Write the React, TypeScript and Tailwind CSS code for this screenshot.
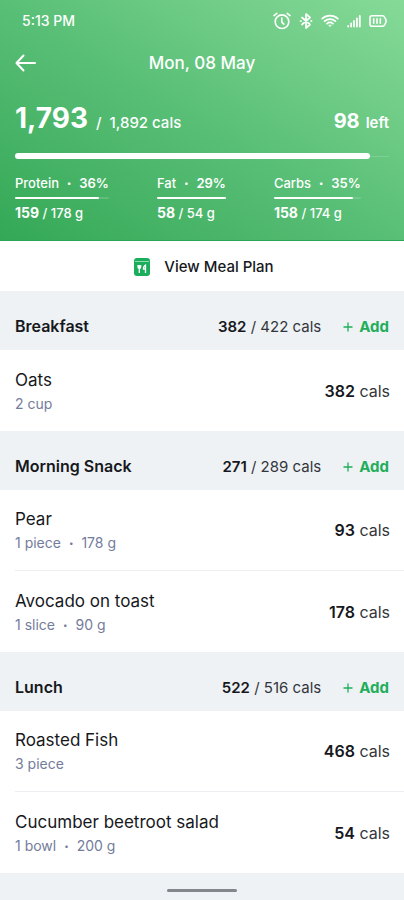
type Macro = { name: string; share: string; eaten: number; goal: number; fill: number };
type Food = { name: string; amount: string; weight?: string; cals: number };
type Meal = { name: string; eaten: number; goal: number; foods: Food[] };

const macros: Macro[] = [
  { name: "Protein", share: "36%", eaten: 159, goal: 178, fill: 89 },
  { name: "Fat", share: "29%", eaten: 58, goal: 54, fill: 100 },
  { name: "Carbs", share: "35%", eaten: 158, goal: 174, fill: 91 },
];

const meals: Meal[] = [
  { name: "Breakfast", eaten: 382, goal: 422, foods: [{ name: "Oats", amount: "2 cup", cals: 382 }] },
  {
    name: "Morning Snack",
    eaten: 271,
    goal: 289,
    foods: [
      { name: "Pear", amount: "1 piece", weight: "178 g", cals: 93 },
      { name: "Avocado on toast", amount: "1 slice", weight: "90 g", cals: 178 },
    ],
  },
  {
    name: "Lunch",
    eaten: 522,
    goal: 516,
    foods: [
      { name: "Roasted Fish", amount: "3 piece", cals: 468 },
      { name: "Cucumber beetroot salad", amount: "1 bowl", weight: "200 g", cals: 54 },
    ],
  },
];

function StatusIcons() {
  return (
    <div className="flex items-center gap-2" aria-hidden="true">
      <svg width="18" height="18" viewBox="0 0 18 18" fill="none" stroke="currentColor" strokeWidth="1.6" strokeLinecap="round" strokeLinejoin="round">
        <circle cx="9" cy="9.7" r="6.8" />
        <path d="M8.800 6v4.100l2 2M1 3.600 3.800 1.300M17 3.600 14.200 1.300" />
      </svg>
      <svg width="14" height="18" viewBox="0 0 14 18" fill="none" stroke="currentColor" strokeWidth="1.700" strokeLinejoin="round" strokeLinecap="round">
        <path d="m3 5.500 8 7L7 16V2l4 3.500-8 7" />
        <path d="M1.500 9h.600M12 9h.600" />
      </svg>
      <svg width="18" height="18" viewBox="0 0 18 18" fill="none" stroke="currentColor" strokeWidth="1.700" strokeLinecap="round">
        <path d="M1.200 6.600c4.400-4 11.200-4 15.600 0M3.600 9.200c3.100-2.800 7.700-2.800 10.800 0M6 11.700c1.800-1.500 4.200-1.500 6 0" />
        <path d="m7.800 13.400 1.200 1.300 1.200-1.300z" fill="currentColor" strokeWidth="0.600" />
      </svg>
      <svg width="14" height="18" viewBox="0 0 14 18" fill="none" stroke="currentColor" strokeWidth="1.800" strokeLinecap="round">
        <path d="M1.200 14v.500M4.100 11.500v3M7 9v5.500M9.900 6.500v8M12.800 4v10.500" />
      </svg>
      <svg width="18" height="18" viewBox="0 0 18 18" fill="none" stroke="currentColor" strokeWidth="1.600" strokeLinecap="round" strokeLinejoin="round">
        <path d="M3 3.700h10.500q1.500 0 2 1.300l1.300 2.500q.600 1.500 0 3L15.500 13q-.500 1.300-2 1.300H3q-2 0-2-2V5.700q0-2 2-2z" />
        <path d="M4.700 6.800v4.400M8 6.800v4.400M11.300 6.800v4.400" />
      </svg>
    </div>
  );
}

function Dot() {
  return <span className="mx-2 align-[2px] text-[8px] leading-none">•</span>;
}

function MacroStat({ macro }: { macro: Macro }) {
  return (
    <div>
      <p className="text-[13px] leading-5 font-medium">
        {macro.name}
        <Dot />
        <span className="font-semibold">{macro.share}</span>
      </p>
      <div className="my-1 h-0.5 rounded-full bg-white/15">
        <div className="h-full rounded-full bg-white" style={{ width: `${macro.fill}%` }} />
      </div>
      <p className="text-[13px] leading-5 font-medium">
        <span className="text-sm leading-5 font-bold">{macro.eaten}</span> / {macro.goal} g
      </p>
    </div>
  );
}

function MealSection({ meal }: { meal: Meal }) {
  return (
    <section>
      <div className="flex items-baseline bg-[#eef2f5] px-[15px] pt-[23px] pb-[11px] text-[15px] leading-6">
        <h2 className="flex-1 text-base leading-6 font-semibold">{meal.name}</h2>
        <p className="text-[#33363b]">
          <span className="font-semibold text-[#16181c]">{meal.eaten}</span> / {meal.goal} cals
        </p>
        <button type="button" className="ml-[22px] flex items-baseline gap-1.5 font-bold text-[#1fae5b]">
          <svg width="10" height="10" viewBox="0 0 10 10" stroke="currentColor" strokeWidth="1.300" aria-hidden="true">
            <path d="M5 .500v9M.500 5h9" />
          </svg>
          Add
        </button>
      </div>
      <ul className="ml-[15px] divide-y divide-[#eceef1]">
        {meal.foods.map((food) => (
          <li key={food.name} className="flex h-[81px] items-center justify-between pr-[14px]">
            <div className="pt-0.5">
              <h3 className="text-[17px] leading-6">{food.name}</h3>
              <p className="text-sm leading-6 text-[#747c9b]">
                {food.amount}
                {food.weight && (
                  <>
                    <Dot />
                    {food.weight}
                  </>
                )}
              </p>
            </div>
            <p className="text-base text-[#33363b]">
              <span className="font-semibold text-[#16181c]">{food.cals}</span> cals
            </p>
          </li>
        ))}
      </ul>
    </section>
  );
}

export default function App() {
  return (
    <div className="flex min-h-screen flex-col bg-white font-['Inter',sans-serif] text-[#16181c]">
      <header className="border-b border-[#2ba658] bg-linear-to-tr from-[#33a856] via-[#59bf77] to-[#86da98] px-[15px] pb-[17px] text-white">
        <div className="flex h-[42px] items-center justify-between pr-0.5 pl-[7px]">
          <span className="text-sm font-medium">5:13 PM</span>
          <StatusIcons />
        </div>
        <div className="grid h-[42px] grid-cols-[22px_1fr_22px] items-center">
          <button type="button" aria-label="Back">
            <svg width="22" height="18" viewBox="0 0 22 18" fill="none" stroke="currentColor" strokeWidth="2" strokeLinecap="round" strokeLinejoin="round">
              <path d="M20 9H1.500M8.500 1.500 1.500 9l7 7.500" />
            </svg>
          </button>
          <h1 className="text-center text-[17px] leading-6 font-medium">Mon, 08 May</h1>
        </div>
        <div className="mt-4 flex items-baseline justify-between leading-9">
          <p className="text-[15px] font-medium">
            <span className="mr-2 text-[28px] font-bold">1,793</span>/&nbsp; 1,892 cals
          </p>
          <p className="text-[15px] font-semibold">
            <span className="mr-1.5 text-xl font-bold">98</span>left
          </p>
        </div>
        <div className="mt-3 flex h-1.5 items-center">
          <div className="h-full w-[95%] rounded-full bg-white" />
          <div className="h-px flex-1 bg-white/15" />
        </div>
        <div className="mt-3.5 flex gap-12">
          {macros.map((macro) => (
            <MacroStat key={macro.name} macro={macro} />
          ))}
        </div>
      </header>
      <button type="button" className="flex h-[50px] items-center justify-center gap-3.5 pt-0.5 pl-1 text-[15px] font-medium">
        <svg width="16" height="18" viewBox="0 0 16 18" aria-hidden="true">
          <rect width="16" height="18" rx="3" fill="#19ad5c" />
          <path d="M1 3.500h14" stroke="#8bdcae" strokeWidth="1" />
          <path d="M4 7v2q0 1.500 1.300 1.500T6.600 9V7M5.300 7v8M11.500 15V7q-2 .800-2 4h2" fill="none" stroke="#fff" strokeWidth="1.300" />
        </svg>
        View Meal Plan
      </button>
      <main>
        {meals.map((meal) => (
          <MealSection key={meal.name} meal={meal} />
        ))}
      </main>
      <footer className="flex flex-1 items-end justify-center bg-[#eef2f5] pt-3 pb-2">
        <div className="h-[3px] w-[70px] rounded-full bg-[#83878b]" />
      </footer>
    </div>
  );
}
